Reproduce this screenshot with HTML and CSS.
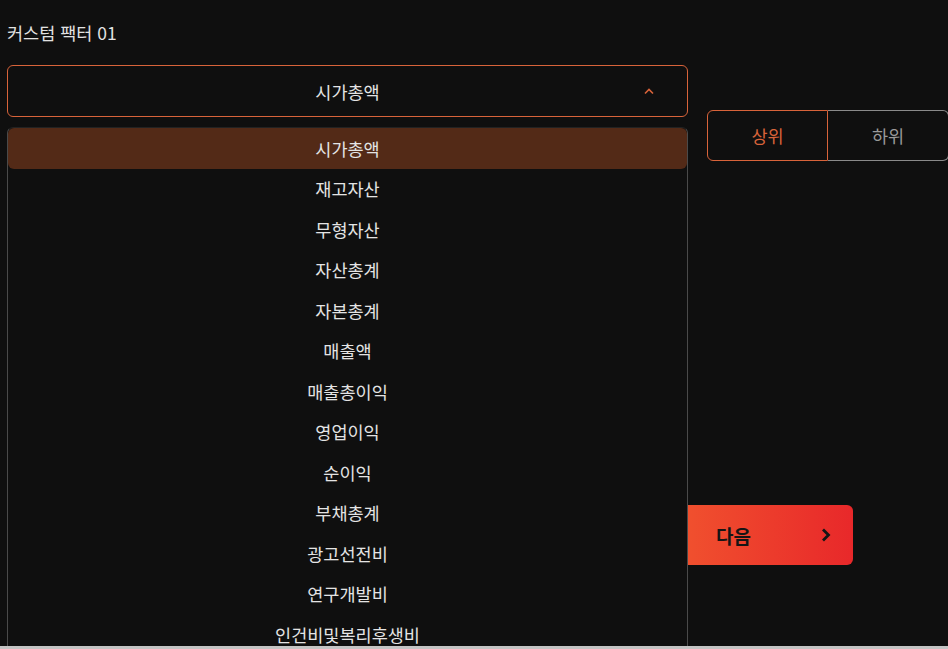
FILE: index.html
```html
<!DOCTYPE html>
<html lang="ko">
<head>
  <meta charset="UTF-8" />
  <meta name="viewport" content="width=device-width, initial-scale=1.0" />
  <title>커스텀 팩터</title>
  <link rel="stylesheet" href="styles.css">
</head>
<body>
  <main class="page">
    <h1 class="title">커스텀 팩터 01</h1>

    <div class="row">
      <div class="field">
        <button class="select">
          <span>시가총액</span>
          <svg class="chevron" width="12" height="8" viewBox="0 0 12 8"><path d="M2 6.5 L6 2.5 L10 6.5" fill="none" stroke="#d8633a" stroke-width="1.6"/></svg>
        </button>

        <ul class="options" id="options"></ul>
      </div>

      <div class="order">
        <button class="order-btn active">상위</button>
        <button class="order-btn">하위</button>
      </div>
    </div>

    <div class="actions">
      <button class="next">
        <span>다음</span>
        <svg width="14" height="16" viewBox="0 0 14 16"><path d="M4 2.5 L9.5 8 L4 13.5" fill="none" stroke="#151515" stroke-width="2.8" stroke-linejoin="miter"/></svg>
      </button>
    </div>
  </main>
  <div class="bottom-bar"></div>

  <script>
    const factors = [
      "시가총액", "재고자산", "무형자산", "자산총계", "자본총계", "매출액",
      "매출총이익", "영업이익", "순이익", "부채총계", "광고선전비", "연구개발비",
      "인건비및복리후생비"
    ];

    const list = document.getElementById("options");
    factors.forEach((name, i) => {
      const li = document.createElement("li");
      li.className = i === 0 ? "option selected" : "option";
      li.textContent = name;
      list.appendChild(li);
    });
  </script>
</body>
</html>
```

FILE: styles.css
```css
:root {
  --bg: #0f0f0f;
  --accent: #d8633a;
  --text: #e4e4e4;
  --muted: #9a9a9a;
  --line: #4a4a4a;
}

* {
  box-sizing: border-box;
  margin: 0;
  padding: 0;
  font-family: "Noto Sans CJK KR", "Noto Sans", sans-serif;
}

html, body {
  height: 100%;
}

body {
  background: var(--bg);
  color: var(--text);
  display: flex;
  flex-direction: column;
  overflow: hidden;
}

.page {
  flex: 1;
  overflow: hidden;
  padding: 0 0 0 7px;
}

.title {
  font-size: 17.5px;
  font-weight: 400;
  line-height: 22px;
  margin: 22px 0 0 0;
  color: #e2e2e2;
}

.row {
  display: flex;
  gap: 19px;
  margin-top: 21px;
}

.field {
  position: relative;
  width: 681px;
  flex-shrink: 0;
}

button {
  background: none;
  border: none;
  color: inherit;
  cursor: pointer;
}

.select {
  width: 100%;
  height: 52px;
  border: 1px solid var(--accent);
  border-radius: 6px;
  display: flex;
  align-items: center;
  justify-content: center;
  position: relative;
  font-size: 17.5px;
  color: var(--text);
}

.chevron {
  position: absolute;
  right: 32px;
  top: 21px;
}

.options {
  position: absolute;
  top: 62px;
  left: 0;
  width: 100%;
  list-style: none;
  background: var(--bg);
  border-left: 1px solid var(--line);
  border-right: 1px solid var(--line);
  border-top: 1px solid #222;
  border-radius: 6px 6px 0 0;
  z-index: 2;
}

.option {
  height: 40.5px;
  display: flex;
  align-items: center;
  justify-content: center;
  font-size: 17.5px;
  color: var(--text);
}

.option.selected {
  background: #532a17;
  border-radius: 6px;
}

.order {
  display: flex;
  margin-top: 45px;
  flex-shrink: 0;
}

.order-btn {
  width: 121px;
  height: 51px;
  font-size: 17.5px;
  color: var(--muted);
  border: 1px solid #8a8a8a;
  border-left: none;
  border-radius: 0 6px 6px 0;
}

.order-btn.active {
  color: var(--accent);
  border: 1px solid var(--accent);
  border-radius: 6px 0 0 6px;
}

.actions {
  display: flex;
  padding-left: 646px;
  margin-top: 344px;
}

.next {
  width: 200px;
  height: 60px;
  border-radius: 6px;
  background: linear-gradient(90deg, #f2582f, #e8282a);
  display: flex;
  align-items: center;
  justify-content: space-between;
  padding: 0 20px 0 63px;
  font-size: 19px;
  font-weight: 700;
  color: #151515;
}

.bottom-bar {
  height: 3px;
  background: #c4c4c4;
  flex-shrink: 0;
}
```
